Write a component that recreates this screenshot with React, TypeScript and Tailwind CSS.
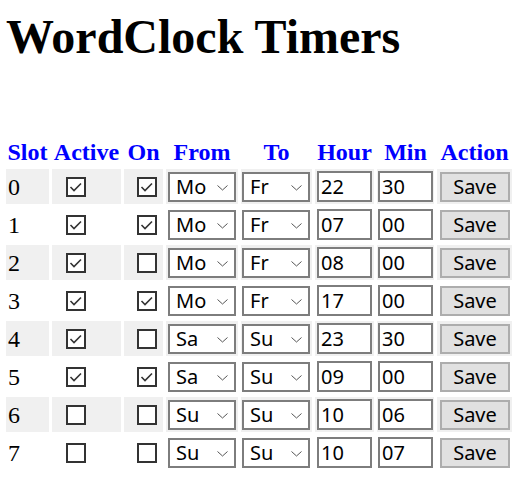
import React from "react";

type Slot = {
  active: boolean;
  on: boolean;
  from: string;
  to: string;
  hour: string;
  min: string;
};

const DAYS = ["Mo", "Tu", "We", "Th", "Fr", "Sa", "Su"];

const slots: Slot[] = [
  { active: true, on: true, from: "Mo", to: "Fr", hour: "22", min: "30" },
  { active: true, on: true, from: "Mo", to: "Fr", hour: "07", min: "00" },
  { active: true, on: false, from: "Mo", to: "Fr", hour: "08", min: "00" },
  { active: true, on: true, from: "Mo", to: "Fr", hour: "17", min: "00" },
  { active: true, on: false, from: "Sa", to: "Su", hour: "23", min: "30" },
  { active: true, on: true, from: "Sa", to: "Su", hour: "09", min: "00" },
  { active: false, on: false, from: "Su", to: "Su", hour: "10", min: "06" },
  { active: false, on: false, from: "Su", to: "Su", hour: "10", min: "07" },
];

const uiFont = "font-['Segoe_UI','Noto_Sans',sans-serif] text-[20px] text-black";

function Check({ checked }: { checked: boolean }) {
  return (
    <span className="flex h-[20px] w-[20px] items-center justify-center border-2 border-[#333] bg-white">
      {checked && (
        <svg width="16" height="16" viewBox="0 0 16 16" fill="none">
          <path d="M2.5 8 L6 11.5 L13 4.5" stroke="#333" strokeWidth="1.6" />
        </svg>
      )}
    </span>
  );
}

function DaySelect({ value }: { value: string }) {
  return (
    <div className="relative w-[68px]">
      <select
        defaultValue={value}
        className={`${uiFont} block h-[30px] w-[68px] appearance-none border-2 border-[#7d7d7d] bg-white py-0 pl-[6px] leading-[26px] outline-none`}
      >
        {DAYS.map((d) => (
          <option key={d} value={d}>
            {d}
          </option>
        ))}
      </select>
      <svg
        className="pointer-events-none absolute right-[8px] top-[13px]"
        width="11"
        height="6"
        viewBox="0 0 11 6"
        fill="none"
      >
        <path d="M0.5 0.5 L5.5 5 L10.5 0.5" stroke="#555" strokeWidth="1" />
      </svg>
    </div>
  );
}

function NumInput({ value }: { value: string }) {
  return (
    <input
      defaultValue={value}
      className={`${uiFont} block h-[31px] w-[55px] border-2 border-[#7d7d7d] bg-white px-[2px] py-0 outline-none`}
    />
  );
}

export default function App() {
  return (
    <div className="min-h-[485px] bg-white font-['Liberation_Serif','Times_New_Roman',serif] text-black">
      <h1 className="m-0 pl-[6px] pt-[9px] text-[48px] font-bold leading-[55px]">
        WordClock Timers
      </h1>

      <table className="ml-[3px] mt-[69px] border-separate border-spacing-[3px] text-[24px]">
        <thead>
          <tr className="text-[#0000ff]">
            <th className="h-[30px] w-[43px] p-0 pt-[2px] font-bold leading-[28px]">Slot</th>
            <th className="w-[69px] p-0 pt-[2px] font-bold leading-[28px]">Active</th>
            <th className="w-[39px] p-0 pt-[2px] font-bold leading-[28px]">On</th>
            <th className="w-[72px] p-0 pt-[2px] font-bold leading-[28px]">From</th>
            <th className="w-[71px] p-0 pt-[2px] font-bold leading-[28px]">To</th>
            <th className="w-[59px] p-0 pt-[2px] font-bold leading-[28px]">Hour</th>
            <th className="w-[57px] p-0 pt-[2px] font-bold leading-[28px]">Min</th>
            <th className="w-[75px] p-0 pt-[2px] font-bold leading-[28px]">Action</th>
          </tr>
        </thead>
        <tbody>
          {slots.map((s, i) => {
            const bg = i % 2 === 0 ? "bg-[#f0f0f0]" : "bg-white";
            return (
              <tr key={i}>
                <td className={`${bg} h-[35px] p-0 pl-[2px] leading-none`}>{i}</td>
                <td className={`${bg} p-0 pl-[14px]`}>
                  <Check checked={s.active} />
                </td>
                <td className={`${bg} p-0 pl-[13px]`}>
                  <Check checked={s.on} />
                </td>
                <td className={`${bg} p-0 pl-[2px]`}>
                  <DaySelect value={s.from} />
                </td>
                <td className={`${bg} p-0 pl-[1px]`}>
                  <DaySelect value={s.to} />
                </td>
                <td className={`${bg} p-0 pl-[2px]`}>
                  <NumInput value={s.hour} />
                </td>
                <td className={`${bg} p-0 pl-[1px]`}>
                  <NumInput value={s.min} />
                </td>
                <td className={`${bg} p-0 pl-[3px]`}>
                  <button
                    className={`${uiFont} block h-[30px] w-[70px] border-2 border-[#adadad] bg-[#e1e1e1] py-0 text-center leading-[26px]`}
                  >
                    Save
                  </button>
                </td>
              </tr>
            );
          })}
        </tbody>
      </table>
    </div>
  );
}
